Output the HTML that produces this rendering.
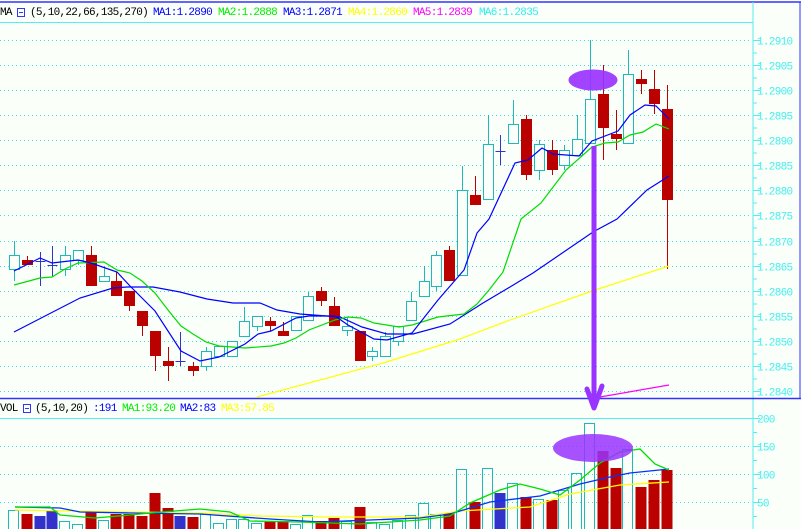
<!DOCTYPE html>
<html><head><meta charset="utf-8"><style>
html,body{margin:0;padding:0;background:#fafffa;overflow:hidden}
svg{display:block}
text{font-family:"Liberation Mono",monospace;font-size:11px;letter-spacing:-0.7px}
</style></head><body>
<svg id="s" width="801" height="529" viewBox="0 0 801 529" xmlns="http://www.w3.org/2000/svg">
<rect width="801" height="529" fill="#fafffa"/>
<g id="grid"></g>
<line x1="0" y1="2" x2="801" y2="2" stroke="#3333ff" stroke-width="1.5"/>
<line x1="800" y1="2" x2="800" y2="398" stroke="#3333ff"/>
<line x1="0" y1="22.5" x2="753" y2="22.5" stroke="#55eeee"/>
<line x1="753" y1="2" x2="753" y2="529" stroke="#55eeee"/>
<line x1="0" y1="398.5" x2="801" y2="398.5" stroke="#3333ff" stroke-width="1.5"/>
<line x1="0" y1="418.5" x2="753" y2="418.5" stroke="#55eeee"/>
<g id="ax"></g>
<text x="0" y="15" fill="#000">MA</text>
<rect x="17.5" y="8.5" width="7" height="8" fill="none" stroke="#3333ff"/><line x1="19" y1="12.5" x2="23" y2="12.5" stroke="#3333ff"/>
<text x="30" y="15" fill="#000">(5,10,22,66,135,270)</text>
<text x="153" y="15" fill="#0000ff">MA1:1.2890</text>
<text x="218" y="15" fill="#00ee00">MA2:1.2888</text>
<text x="283" y="15" fill="#0000ff">MA3:1.2871</text>
<text x="348" y="15" fill="#ffff00">MA4:1.2860</text>
<text x="413" y="15" fill="#ff00ff">MA5:1.2839</text>
<text x="479" y="15" fill="#33eeee">MA6:1.2835</text>
<text x="0" y="411" fill="#000">VOL</text>
<rect x="23.5" y="404.5" width="7" height="8" fill="none" stroke="#3333ff"/><line x1="25" y1="408.5" x2="29" y2="408.5" stroke="#3333ff"/>
<text x="35" y="411" fill="#000">(5,10,20)</text>
<text x="93" y="411" fill="#0000ff">:191</text>
<text x="122" y="411" fill="#00ee00">MA1:93.20</text>
<text x="180" y="411" fill="#0000ff">MA2:83</text>
<text x="221" y="411" fill="#ffff00">MA3:57.85</text>
<g id="c"></g>
<g fill="none" stroke-width="1.2">
<polyline stroke="#ffff00" points="257,397 383,363 457,340 510,320 595,290 669,266"/>
<polyline stroke="#ff00ff" points="600,397 669,385"/>
<polyline stroke="#0000ff" points="14,332 80,298 113,288 127,287 153,287 180,292 207,299 233,303 260,303 277,310 300,314 340,317 362,327 387,334 413,334 450,324 483,303 510,287 533,273 593,232 617,219 647,190 669,176"/>
<polyline stroke="#00dd00" points="14,285 40,278 52,277 65,269 78,263 104,262 117,270 130,273 142,281 155,293 168,310 181,326 193,334 206,342 219,346 245,348 271,346 284,343 296,338 309,330 335,320 348,317 361,318 374,323 399,327 412,325 438,317 464,314 477,304 489,290 503,272 521,219 541,203 566,170 592,147 605,143 618,142 630,135 643,132 656,124 669,129"/>
<polyline stroke="#0000ff" points="14,271 40,258 52,263 78,260 91,263 117,272 130,286 155,311 181,351 200,361 219,357 245,344 258,334 271,331 296,318 309,316 335,316 348,325 374,339 387,340 412,333 438,300 451,285 464,270 477,233 489,219 515,163 528,160 542,148 553,154 579,156 592,141 618,131 630,115 645,105 656,106 669,119"/>
</g>
<g id="v"></g>
<g fill="none" stroke-width="1.3">
<polyline stroke="#ffff00" points="15,510 130,512 200,513 260,516 330,517 420,517 460,511 530,507 570,494 620,485 669,482"/>
<polyline stroke="#0033ff" points="15,507 60,508 80,512 130,513 200,514 270,519 320,522 420,518 450,514 490,502 540,496 580,484 610,477 630,473 669,469"/>
<polyline stroke="#00dd00" points="15,507 50,507 60,515 95,518 130,515 150,513 200,509 230,512 250,521 300,522 360,524 420,520 450,516 470,503 500,490 520,484 540,489 560,495 580,480 600,463 620,452 640,449 655,464 669,470"/>
</g>
<ellipse cx="593" cy="80" rx="24.5" ry="10.5" fill="#9933ff" opacity="0.92"/>
<ellipse cx="593" cy="448" rx="40" ry="14" fill="#9933ff" opacity="0.85"/>
<line x1="594" y1="146" x2="594" y2="402" stroke="#9933ff" stroke-width="5"/>
<polyline points="587,389 594,408 602,386" fill="none" stroke="#9933ff" stroke-width="5" stroke-linecap="round" stroke-linejoin="round"/>
</svg>
<script>
var NS="http://www.w3.org/2000/svg";
function el(p,n,a){var e=document.createElementNS(NS,n);for(var k in a)e.setAttribute(k,a[k]);p.appendChild(e);return e;}
var g=document.getElementById('grid'),ax=document.getElementById('ax');
var labs=["1.2910","1.2905","1.2900","1.2895","1.2890","1.2885","1.2880","1.2875","1.2870","1.2865","1.2860","1.2855","1.2850","1.2845","1.2840"];
for(var i=0;i<15;i++){var y=Math.round(39.5+i*25.14)+0.5;
el(g,'line',{x1:0,y1:y,x2:752,y2:y,stroke:'#44dddd','stroke-dasharray':'1,3'});
el(ax,'line',{x1:753,y1:y,x2:760,y2:y,stroke:'#55eeee'});
if(i<14)el(ax,'line',{x1:753,y1:y+12.5,x2:757,y2:y+12.5,stroke:'#55eeee'});
var t=el(ax,'text',{x:757,y:y+4,fill:'#44eeee'});t.textContent=labs[i];}
var vl=[[418.5,"200"],[446.5,"150"],[474.5,"100"],[502.5,"50"]];
for(var i=0;i<4;i++){var y=vl[i][0];
if(i>0)el(g,'line',{x1:0,y1:y,x2:752,y2:y,stroke:'#44dddd','stroke-dasharray':'1,3'});
el(ax,'line',{x1:753,y1:y,x2:760,y2:y,stroke:'#55eeee'});
el(ax,'line',{x1:753,y1:y+14,x2:757,y2:y+14,stroke:'#55eeee'});
var t=el(ax,'text',{x:757,y:y+4,fill:'#44eeee'});t.textContent=vl[i][1];}
var C=[[241,281,255,269,'c'],[256,265,260,265,'r'],[252,286,261,261,'x'],[246,276,265,265,'x'],[246,276,255,269,'c'],[250,265,250,260,'c'],[246,286,255,286,'r'],[266,281,276,281,'c'],[272,296,281,296,'r'],[291,311,291,306,'r'],[311,336,311,326,'r'],[331,371,331,356,'r'],[347,381,361,366,'r'],[332,366,361,361,'x'],[362,376,366,371,'r'],[347,371,351,366,'c'],[346,356,346,356,'c'],[341,356,341,356,'c'],[307,336,321,336,'c'],[316,331,316,326,'c'],[317,331,321,326,'r'],[322,336,331,336,'r'],[316,330,316,330,'c'],[292,320,296,320,'c'],[287,306,291,301,'r'],[297,326,306,326,'r'],[317,336,326,330,'c'],[331,361,331,361,'r'],[347,361,351,356,'c'],[332,356,336,356,'c'],[326,346,326,341,'c'],[292,320,301,320,'c'],[266,296,281,296,'c'],[251,291,255,286,'c'],[246,281,250,281,'r'],[166,275,190,275,'c'],[176,205,195,205,'r'],[115,199,144,199,'c'],[135,165,151,151,'x'],[100,143,124,143,'c'],[115,180,119,175,'r'],[140,180,144,170,'c'],[140,175,150,170,'r'],[145,170,150,165,'c'],[115,155,139,155,'c'],[40,143,99,143,'c'],[65,160,94,128,'r'],[110,150,134,139,'r'],[50,143,74,143,'c'],[70,94,79,84,'r'],[70,114,89,104,'r'],[85,269,109,200,'r']];
var V=[[510,'c'],[514,'r'],[516,'b'],[510,'b'],[521,'c'],[524,'c'],[511,'r'],[520,'c'],[514,'r'],[514,'r'],[516,'r'],[493,'r'],[508,'r'],[516,'b'],[517,'r'],[514,'c'],[523,'c'],[519,'c'],[519,'c'],[523,'c'],[521,'r'],[521,'r'],[524,'c'],[515,'c'],[521,'r'],[518,'r'],[521,'c'],[507,'r'],[522,'c'],[524,'c'],[520,'c'],[515,'c'],[503,'c'],[514,'c'],[513,'r'],[469,'c'],[502,'r'],[468,'c'],[493,'b'],[483,'c'],[497,'r'],[499,'c'],[500,'r'],[490,'c'],[473,'c'],[423,'c'],[451,'r'],[468,'r'],[449,'c'],[487,'r'],[480,'r'],[470,'r']];
var cg=document.getElementById('c'),vg=document.getElementById('v');
var RED='#bb0000',CY='#20b8b8',BL='#3333cc';
for(var i=0;i<52;i++){var x=Math.round(14+12.8*i)+0.5,d=C[i];
if(d[4]=='x'){el(cg,'line',{x1:x,y1:d[0],x2:x,y2:d[1],stroke:BL});el(cg,'line',{x1:x-5,y1:d[2]+0.5,x2:x+5,y2:d[2]+0.5,stroke:BL});}
else if(d[4]=='r'){el(cg,'line',{x1:x,y1:d[0],x2:x,y2:d[1],stroke:RED});el(cg,'rect',{x:x-5.5,y:d[2],width:11,height:Math.max(3,d[3]-d[2]),fill:RED});}
else{el(cg,'line',{x1:x,y1:d[0],x2:x,y2:d[2],stroke:CY});el(cg,'line',{x1:x,y1:d[3],x2:x,y2:d[1],stroke:CY});el(cg,'rect',{x:x-5,y:d[2]+0.5,width:10,height:Math.max(2,d[3]-d[2]),fill:'#fafffa',stroke:CY});}
var v=V[i],vx=Math.round(14+12.8*i);
if(v[1]=='c')el(vg,'rect',{x:vx-5.5,y:v[0]+0.5,width:10,height:540-v[0],fill:'none',stroke:CY});
else el(vg,'rect',{x:vx-5.5,y:v[0],width:11,height:540-v[0],fill:v[1]=='r'?RED:BL});}
</script>
</body></html>
